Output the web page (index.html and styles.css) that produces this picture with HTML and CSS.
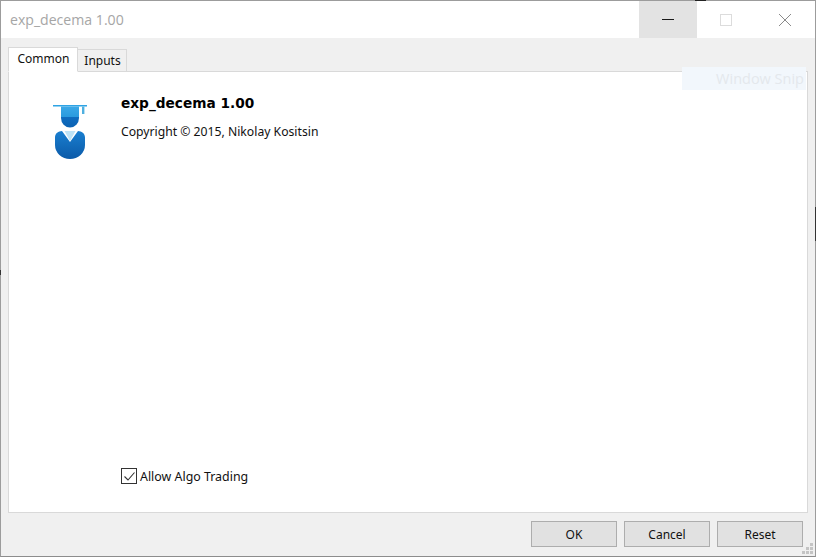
FILE: index.html
```html
<!DOCTYPE html>
<html lang="en">
<head>
<meta charset="utf-8">
<title>exp_decema 1.00</title>
<link rel="stylesheet" href="styles.css">
</head>
<body>
<div class="window">
  <header class="titlebar">
    <div class="title">exp_decema 1.00</div>
    <div class="controls">
      <div class="ctl ctl-min"><svg width="12" height="12" viewBox="0 0 12 12"><path d="M0 5.5h12" stroke="#1a1a1a" stroke-width="1"/></svg></div>
      <div class="ctl ctl-max"><svg width="12" height="12" viewBox="0 0 12 12"><rect x="0.5" y="0.5" width="11" height="11" fill="none" stroke="#dcdcdc"/></svg></div>
      <div class="ctl ctl-close"><svg width="12" height="12" viewBox="0 0 12 12"><path d="M0 0L12 12M12 0L0 12" stroke="#8a8a8a" stroke-width="1"/></svg></div>
    </div>
  </header>
  <main class="content">
    <div class="tabs">
      <div class="tab tab-active">Common</div>
      <div class="tab">Inputs</div>
    </div>
    <section class="panel">
      <div class="about">
        <svg class="logo" width="36" height="56" viewBox="0 0 36 56">
          <defs>
            <linearGradient id="body" x1="0" y1="0" x2="0" y2="1"><stop offset="0" stop-color="#1a7fd0"/><stop offset="1" stop-color="#0b5aa8"/></linearGradient>
            <linearGradient id="head" x1="0" y1="0" x2="0" y2="1"><stop offset="0" stop-color="#3aa8e8"/><stop offset="0.5" stop-color="#2a9ade"/><stop offset="0.5" stop-color="#0f6cc0"/><stop offset="1" stop-color="#0b62b2"/></linearGradient>
          </defs>
          <path d="M1 1h34v1.600H1z" fill="#2ea3e4"/>
          <path d="M30 2.600h2.400v7.400H30z" fill="#4fb0e0"/>
          <path d="M9 2.600h18v11.400a9 9.500 0 0 1-18 0z" fill="url(#head)"/>
          <path d="M10 27c-3.500 .3-7 2-7 6.500v7.500a15 14 0 0 0 30 0v-7.500c0-4.500-3.500-6.200-7-6.500L18 38z" fill="url(#body)"/>
          <path d="M12.500 27h11L18 37z" fill="#bfe3f6"/>
        </svg>
        <div class="about-text">
          <h1 class="name">exp_decema 1.00</h1>
          <p class="copy">Copyright © 2015, Nikolay Kositsin</p>
        </div>
      </div>
      <label class="check">
        <span class="box"><svg width="15" height="15" viewBox="0 0 15 15"><path d="M2.500 7.500L6 11L12.500 3.500" fill="none" stroke="#333" stroke-width="1.100"/></svg></span>
        <span>Allow Algo Trading</span>
      </label>
    </section>
    <footer class="buttons">
      <button class="btn" type="button">OK</button>
      <button class="btn" type="button">Cancel</button>
      <button class="btn" type="button">Reset</button>
    </footer>
  </main>
  <div class="snip">Window Snip</div>
  <svg class="grip" width="12" height="12" viewBox="0 0 12 12"><path d="M8 0h3v3H8zM4 4h3v3H4zM8 4h3v3H8zM0 8h3v3H0zM4 8h3v3H4zM8 8h3v3H8z" fill="#c4c4c4"/></svg>
  <div class="edge edge-right"></div>
  <div class="edge edge-left"></div>
  <div class="edge-top"></div>
</div>
</body>
</html>
```
FILE: styles.css
```css
* { box-sizing: border-box; }
html, body { margin: 0; height: 100%; }
body { font-family: "Noto Sans", "DejaVu Sans", sans-serif; font-size: 12px; color: #111; overflow: hidden; }
.window { position: relative; width: 816px; height: 557px; display: flex; flex-direction: column; border: 1px solid #9c9c9c; border-bottom-color: #8c8c8c; background: #f0f0f0; }
.titlebar { height: 37px; flex: none; background: #fff; display: flex; justify-content: space-between; }
.title { font-family: "Open Sans", "Noto Sans", sans-serif; font-size: 14.100px; color: #a6a6a6; padding: 9px 0 0 9px; line-height: 20px; }
.controls { display: flex; margin-right: 1px; }
.ctl { width: 58px; height: 37px; display: flex; align-items: center; justify-content: center; }
.ctl-min { background: #e3e3e3; }
.ctl-close { width: 59px; }
.content { flex: 1; display: flex; flex-direction: column; padding: 9px 7px 0 7px; min-height: 0; }
.tabs { display: flex; align-items: flex-end; height: 25px; flex: none; position: relative; z-index: 1; margin-bottom: -1px; }
.tab { height: 23px; padding: 1px 0 0 1px; line-height: 20px; border: 1px solid #d9d9d9; border-left: 0; background: #f0f0f0; width: 49px; text-align: center; }
.tab-active { height: 25px; width: 70px; padding: 0 0 0 1px; line-height: 22px; background: #fff; border-left: 1px solid #d9d9d9; border-bottom-color: #fff; }
.panel { flex: 1; background: #fff; border: 1px solid #d9d9d9; display: flex; flex-direction: column; justify-content: space-between; padding: 21px 0 28px 0; min-height: 0; }
.about { display: flex; }
.logo { flex: none; margin: 11px 0 0 43px; }
.about-text { margin-left: 33px; }
.name { margin: 0; font-size: 13.700px; line-height: 20px; font-weight: 700; color: #000; font-family: "DejaVu Sans", sans-serif; }
.copy { margin: 10px 0 0; font-size: 12.200px; line-height: 18px; color: #111; }
.check { display: flex; align-items: center; gap: 3px; margin-left: 112px; height: 16px; font-size: 12.400px; }
.box { width: 16px; height: 16px; border: 1px solid #333; background: #fff; display: block; line-height: 0; }
.buttons { height: 43px; flex: none; display: flex; justify-content: flex-end; gap: 7px; padding: 8px 5px 0 0; }
.btn { width: 86px; height: 26px; font: inherit; color: #111; background: #e1e1e1; border: 1px solid #adadad; padding: 1px 0 0; }
.snip { position: absolute; left: 681px; top: 66px; width: 124px; height: 23px; background: #f2f7fc; color: #e4e8ec; font-family: "Open Sans", sans-serif; font-size: 14.500px; line-height: 23px; text-align: right; padding-right: 2px; }
.grip { position: absolute; right: 1px; bottom: 1px; }
.edge { position: absolute; width: 1px; background: #333; }
.edge-right { right: -1px; top: 206px; height: 34px; }
.edge-left { left: -1px; top: 269px; height: 5px; }
.edge-top { position: absolute; top: -1px; left: 694px; width: 11px; height: 1px; background: #222; }
```
